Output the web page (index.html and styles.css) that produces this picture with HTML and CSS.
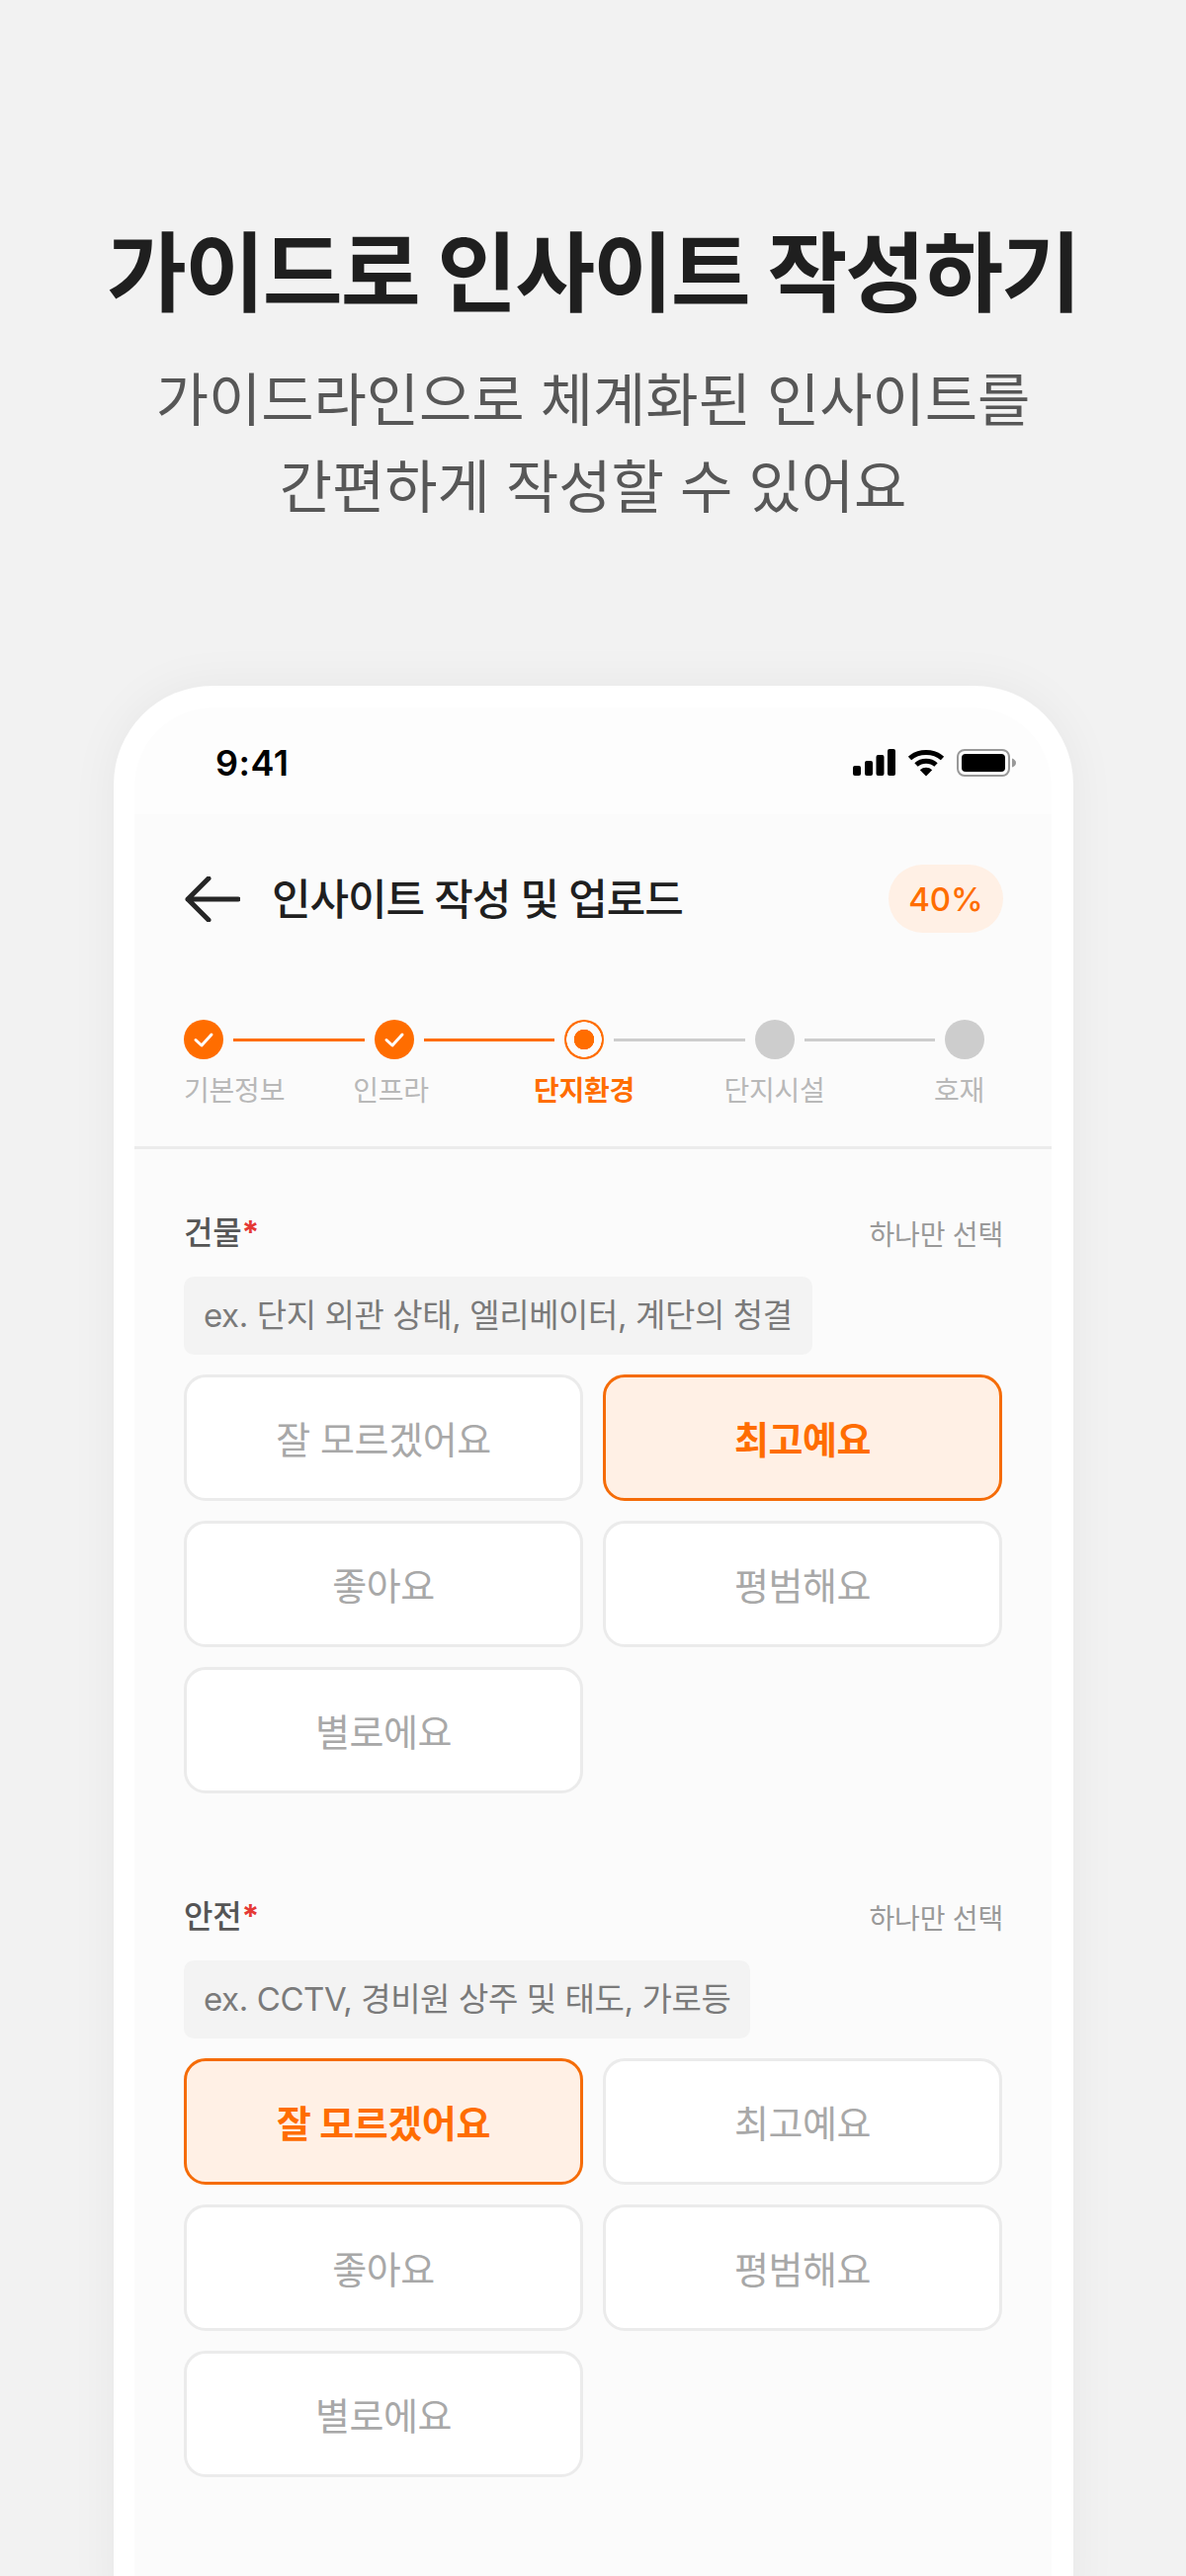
FILE: index.html
```html
<!DOCTYPE html>
<html lang="ko">
<head>
<meta charset="utf-8">
<title>가이드로 인사이트 작성하기</title>
<link rel="stylesheet" href="styles.css">
</head>
<body>
<main class="page">
  <header class="hero">
    <h1 class="hero-title">가이드로 인사이트 작성하기</h1>
    <p class="hero-sub">가이드라인으로 체계화된 인사이트를<br>간편하게 작성할 수 있어요</p>
  </header>
  <section class="phone">
    <div class="screen">
      <div class="status">
        <span class="time">9:41</span>
        <div class="status-icons">
          <svg class="ic-signal" viewBox="0 0 43 27"><rect x="0" y="17" width="8" height="10" rx="2"/><rect x="12" y="12" width="8" height="15" rx="2"/><rect x="23.500" y="6" width="8" height="21" rx="2"/><rect x="35" y="0" width="8" height="27" rx="2"/></svg>
          <svg class="ic-wifi" viewBox="0 0 38 28"><path class="wf" d="M2.500 9.500C11.500 1.500 26.500 1.500 35.500 9.500"/><path class="wf" d="M9 16C14.500 11 23.500 11 29 16"/><path d="M12.800 21.300C16.500 18 21.500 18 25.200 21.300L19 27.500Z"/></svg>
          <svg class="ic-batt" viewBox="0 0 60 28"><rect class="bt" x="1" y="1" width="52" height="26" rx="7"/><rect x="5" y="5" width="44" height="18" rx="4"/><path class="nub" d="M56 9.500C58.500 10.500 60 12 60 14C60 16 58.500 17.500 56 18.500Z"/></svg>
        </div>
      </div>
      <div class="content">
        <div class="appbar">
          <svg class="ic-back" viewBox="0 0 56 46"><path d="M54 23H3M24 2L3 23L24 44"/></svg>
          <h2 class="appbar-title">인사이트 작성 및 업로드</h2>
          <span class="badge">40%</span>
        </div>
        <div class="stepper">
          <div class="step first">
            <span class="dot done"><svg viewBox="0 0 40 40"><path d="M12 20.500L18 26L28 15"/></svg></span>
            <span class="step-label">기본정보</span>
          </div>
          <span class="line on"></span>
          <div class="step second">
            <span class="dot done"><svg viewBox="0 0 40 40"><path d="M12 20.500L18 26L28 15"/></svg></span>
            <span class="step-label">인프라</span>
          </div>
          <span class="line on"></span>
          <div class="step current">
            <span class="dot now"></span>
            <span class="step-label">단지환경</span>
          </div>
          <span class="line"></span>
          <div class="step">
            <span class="dot"></span>
            <span class="step-label">단지시설</span>
          </div>
          <span class="line"></span>
          <div class="step last">
            <span class="dot"></span>
            <span class="step-label">호재</span>
          </div>
        </div>
        <div class="form">
          <section class="group">
            <div class="group-head">
              <h3 class="group-title">건물<em class="req">*</em></h3>
              <span class="group-note">하나만 선택</span>
            </div>
            <p class="hint">ex. 단지 외관 상태, 엘리베이터, 계단의 청결</p>
            <div class="options">
              <button class="opt">잘 모르겠어요</button>
              <button class="opt sel">최고예요</button>
              <button class="opt">좋아요</button>
              <button class="opt">평범해요</button>
              <button class="opt">별로에요</button>
            </div>
          </section>
          <section class="group">
            <div class="group-head">
              <h3 class="group-title">안전<em class="req">*</em></h3>
              <span class="group-note">하나만 선택</span>
            </div>
            <p class="hint">ex. CCTV, 경비원 상주 및 태도, 가로등</p>
            <div class="options">
              <button class="opt sel">잘 모르겠어요</button>
              <button class="opt">최고예요</button>
              <button class="opt">좋아요</button>
              <button class="opt">평범해요</button>
              <button class="opt">별로에요</button>
            </div>
          </section>
        </div>
      </div>
    </div>
  </section>
</main>
</body>
</html>
```
FILE: styles.css
```css
* { box-sizing: border-box; }
html, body { margin: 0; height: 2607px; overflow: hidden; }
body {
  background: #f2f2f2;
  font-family: "Inter", "Noto Sans CJK KR", sans-serif;
  color: #1f1f1f;
}
.page { height: 2607px; overflow: hidden; padding-top: 218px; }
.hero { text-align: center; height: 476px; }
.hero-title {
  margin: 0;
  font-size: 88px;
  line-height: 116px;
  font-weight: 700;
  letter-spacing: -2.1px;
  color: #1f1f1f;
}
.hero-sub {
  margin: 27px 0 0;
  font-size: 58px;
  line-height: 88px;
  font-weight: 400;
  letter-spacing: -.1px;
  color: #575757;
}
.phone {
  width: 971px;
  margin: 0 0 0 115px;
  height: 1950px;
  padding: 22px 22px 0 21px;
  background: #fff;
  border-radius: 100px 100px 0 0;
  box-shadow: 0 0 50px rgba(0, 0, 0, .05);
}
.screen {
  height: 100%;
  background: #fdfdfd;
  border-radius: 80px 80px 0 0;
}
.status {
  height: 108px;
  display: flex;
  justify-content: space-between;
  align-items: center;
  padding: 0 36px 0 82px;
}
.time { font-size: 36px; line-height: 44px; font-weight: 600; color: #000; letter-spacing: .5px; margin-top: 3px; }
.status-icons { display: flex; align-items: center; gap: 12px; margin-top: 3px; }
.ic-signal { width: 43px; height: 27px; fill: #000; }
.ic-wifi { width: 38px; height: 28px; fill: #000; }
.wf { fill: none; stroke: #000; stroke-width: 5; }
.ic-batt { width: 60px; height: 28px; fill: #000; }
.bt { fill: none; stroke: #999; stroke-width: 2; }
.nub { fill: #999; }
.content { background: #fbfbfb; height: calc(100% - 108px); }
.appbar {
  display: flex;
  align-items: center;
  padding: 51px 49px 0 51px;
}
.ic-back { width: 56px; height: 46px; fill: none; stroke: #262626; stroke-width: 5; stroke-linecap: round; stroke-linejoin: round; }
.appbar-title {
  margin: 2px 0 0 32px;
  font-size: 43px;
  line-height: 67px;
  font-weight: 500;
  letter-spacing: -1.1px;
  color: #1f1f1f;
  flex: 1;
}
.badge {
  height: 69px;
  width: 116px;
  display: flex;
  align-items: center;
  justify-content: center;
  border-radius: 35px;
  background: #fff0e5;
  color: #ff6d00;
  font-size: 33px;
  font-weight: 500;
}
.stepper {
  display: flex;
  align-items: flex-start;
  padding: 88px 68px 0 50px;
  height: 219px;
  border-bottom: 3px solid #ebebeb;
}
.step { width: 40px; flex: none; display: flex; flex-direction: column; align-items: center; }
.step.first { align-items: flex-start; }
.step.second .step-label { margin-right: 6px; }
.step.last { align-items: flex-end; }
.dot {
  width: 40px;
  height: 40px;
  border-radius: 50%;
  background: #cdcdcd;
  display: block;
}
.dot svg { display: block; fill: none; stroke: #fff; stroke-width: 3; stroke-linecap: round; stroke-linejoin: round; }
.dot.done { background: #ff6d00; }
.dot.now { background: radial-gradient(circle, #ff6d00 0 10px, #fbfbfb 10.500px 17.500px, #ff6d00 18px); }
.line { flex: 1; height: 3px; margin: 18.500px 10px 0; background: #cdcdcd; }
.line.on { background: #ff6d00; }
.step-label {
  margin-top: 12px;
  white-space: nowrap;
  font-size: 28px;
  line-height: 40px;
  color: #b8b8b8;
  letter-spacing: -.2px;
}
.current .step-label { color: #ff6d00; font-weight: 700; letter-spacing: -.3px; }
.form { padding: 0 49px 0 50px; }
.group { padding-top: 62px; height: 692px; }
.group-head { display: flex; justify-content: space-between; align-items: center; height: 46px; }
.group-title { margin: 0; font-size: 32px; font-weight: 500; color: #555; line-height: 46px; letter-spacing: -.2px; }
.req { font-style: normal; color: #e53935; font-weight: 700; font-family: "Inter", sans-serif; }
.group-note { font-size: 28px; color: #999; letter-spacing: -.2px; }
.hint {
  margin: 21px 0 0;
  display: block;
  width: fit-content;
  height: 79px;
  padding: 0 20px;
  border-radius: 10px;
  background: #f3f3f3;
  font-size: 33px;
  line-height: 78px;
  color: #7a7a7a;
  letter-spacing: -.4px;
}
.options { display: grid; grid-template-columns: 404px 404px; gap: 20px; margin-top: 20px; }
.opt {
  height: 128px;
  padding: 0 0 2px;
  border: 3px solid #ebebeb;
  border-radius: 22px;
  background: #fff;
  font: inherit;
  font-size: 38px;
  letter-spacing: -.4px;
  color: #a8a8a8;
}
.opt.sel { background: #fff0e5; border: 3px solid #f56c08; color: #ff6d00; font-weight: 700; }
```
